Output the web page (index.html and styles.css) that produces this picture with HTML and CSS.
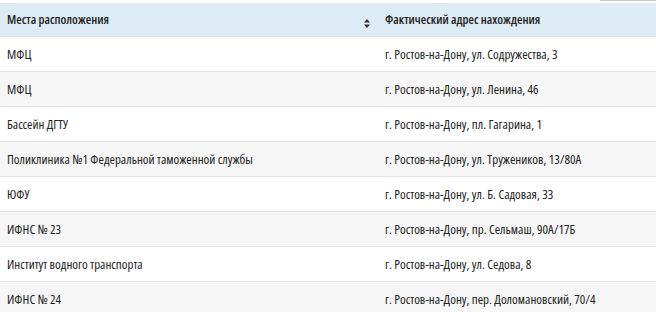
FILE: index.html
```html
<!DOCTYPE html>
<html lang="ru">
<head>
  <meta charset="UTF-8">
  <title>Места расположения</title>
  <link rel="stylesheet" href="styles.css">
</head>
<body>
  <div class="top-bar"><span class="search-edge"></span></div>
  <table class="places">
    <thead>
      <tr>
        <th class="col-place">
          Места расположения
          <span class="sort-icon">
            <svg width="6" height="9" viewBox="0 0 6 9"><path d="M3 0 L6 3.5 H0 Z M3 9 L6 5.5 H0 Z" fill="#333"/></svg>
          </span>
        </th>
        <th>Фактический адрес нахождения</th>
      </tr>
    </thead>
    <tbody>
      <tr><td>МФЦ</td><td>г. Ростов-на-Дону, ул. Содружества, 3</td></tr>
      <tr><td>МФЦ</td><td>г. Ростов-на-Дону, ул. Ленина, 46</td></tr>
      <tr><td>Бассейн ДГТУ</td><td>г. Ростов-на-Дону, пл. Гагарина, 1</td></tr>
      <tr><td>Поликлиника №1 Федеральной таможенной службы</td><td>г. Ростов-на-Дону, ул. Тружеников, 13/80А</td></tr>
      <tr><td>ЮФУ</td><td>г. Ростов-на-Дону, ул. Б. Садовая, 33</td></tr>
      <tr><td>ИФНС № 23</td><td>г. Ростов-на-Дону, пр. Сельмаш, 90А/17Б</td></tr>
      <tr><td>Институт водного транспорта</td><td>г. Ростов-на-Дону, ул. Седова, 8</td></tr>
      <tr><td>ИФНС № 24</td><td>г. Ростов-на-Дону, пер. Доломановский, 70/4</td></tr>
    </tbody>
  </table>
</body>
</html>
```

FILE: styles.css
```css
body {
    margin: 0;
    padding: 0;
    background: #fff;
    font-family: 'Open Sans', 'DejaVu Sans Condensed', sans-serif;
    font-stretch: 75%;
    font-weight: 500;
    font-size: 13px;
    color: #222;
}

.top-bar {
    height: 3px;
    display: flex;
    justify-content: flex-end;
}

.search-edge {
    width: 56px;
    height: 1px;
    background: #c8c8c8;
}

.places {
    width: 100%;
    border-collapse: collapse;
}

.places th {
    background: #dcebf4;
    font-weight: 650;
    text-align: left;
    height: 33px;
    padding: 0 7px;
    font-size: 12.5px;
}

.places th.col-place {
    width: 364px;
    position: relative;
}

.sort-icon {
    position: absolute;
    right: 8px;
    top: 12px;
}

.places td {
    height: 34px;
    padding: 0 7px;
    border-top: 1px solid #e2e2e2;
}

.places tbody tr:nth-child(even) td {
    background: #f6f6f6;
}
```
